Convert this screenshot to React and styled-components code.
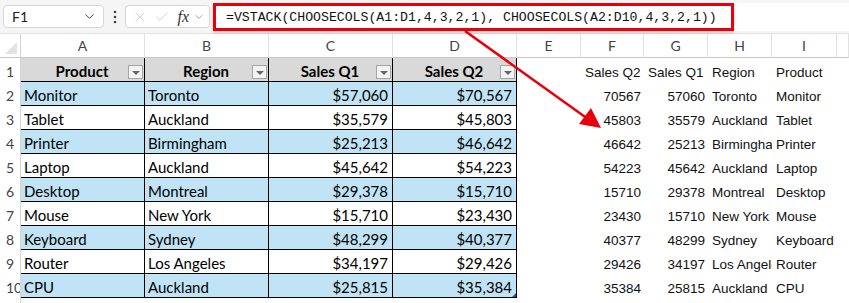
import React from "react";
import styled, { createGlobalStyle } from "styled-components";
import { ChevronDown, X, Check } from "lucide-react";

const GlobalStyle = createGlobalStyle`
  html, body { margin: 0; padding: 0; background: #fff; }
  body { width: 849px; height: 303px; overflow: hidden; }
`;

const COLS = "21px 124px 124px 124px 124px 64px 63px 64px 64px 65px 1fr";
const LETTERS = ["A", "B", "C", "D", "E", "F", "G", "H", "I", ""];

const rows = [
  ["Monitor", "Toronto", 57060, 70567],
  ["Tablet", "Auckland", 35579, 45803],
  ["Printer", "Birmingham", 25213, 46642],
  ["Laptop", "Auckland", 45642, 54223],
  ["Desktop", "Montreal", 29378, 15710],
  ["Mouse", "New York", 15710, 23430],
  ["Keyboard", "Sydney", 48299, 40377],
  ["Router", "Los Angeles", 34197, 29426],
  ["CPU", "Auckland", 25815, 35384],
];

const money = (n) => "$" + n.toLocaleString("en-US");

export default function App() {
  return (
    <Page>
      <GlobalStyle />
      <Toolbar>
        <NameBox>
          <span>F1</span>
          <ChevronDown size={15} strokeWidth={1.6} color="#444" />
        </NameBox>
        <Dots>
          <svg width="4" height="14" viewBox="0 0 4 14">
            <circle cx="2" cy="2" r="1.3" fill="#444" />
            <circle cx="2" cy="7" r="1.3" fill="#444" />
            <circle cx="2" cy="12" r="1.3" fill="#444" />
          </svg>
        </Dots>
        <FxBox>
          <X size={16} strokeWidth={1.2} color="#c4c4c4" />
          <Check size={16} strokeWidth={1.2} color="#c4c4c4" />
          <Fx>fx</Fx>
          <ChevronDown size={12} strokeWidth={1.4} color="#777" />
        </FxBox>
        <FormulaField>
          <Highlight>
            =VSTACK(CHOOSECOLS(A1:D1,4,3,2,1), CHOOSECOLS(A2:D10,4,3,2,1))
          </Highlight>
        </FormulaField>
      </Toolbar>

      <Sheet>
        <Row>
          <Corner />
          {LETTERS.map((l, i) => (
            <ColHead key={i}>{l}</ColHead>
          ))}
        </Row>

        <Row>
          <RowHead>1</RowHead>
          {["Product", "Region", "Sales Q1", "Sales Q2"].map((h) => (
            <HeadCell key={h}>
              {h}
              <FilterBtn />
            </HeadCell>
          ))}
          <Cell />
          {["Sales Q2", "Sales Q1", "Region", "Product"].map((h) => (
            <Spill key={h}>{h}</Spill>
          ))}
          <Cell />
        </Row>

        {rows.map((r, i) => (
          <Row key={r[0]}>
            <RowHead>{i + 2}</RowHead>
            <TableCell $blue={i % 2 === 0}>{r[0]}</TableCell>
            <TableCell $blue={i % 2 === 0}>{r[1]}</TableCell>
            <TableCell $blue={i % 2 === 0} $right>
              {money(r[2])}
            </TableCell>
            <TableCell $blue={i % 2 === 0} $right $handle={i === rows.length - 1}>
              {money(r[3])}
            </TableCell>
            <Cell />
            <Spill $right>{r[3]}</Spill>
            <Spill $right>{r[2]}</Spill>
            <Spill>{r[1]}</Spill>
            <Spill>{r[0]}</Spill>
            <Cell />
          </Row>
        ))}

        <Row>
          <RowHead />
        </Row>
      </Sheet>

      <Arrow width="849" height="303" viewBox="0 0 849 303">
        <line x1="465" y1="31" x2="588" y2="119" stroke="#e8000b" strokeWidth="2.6" />
        <polygon points="601,128 579,124 591,108" fill="#e8000b" />
      </Arrow>
    </Page>
  );
}

const Page = styled.div`
  position: relative;
  width: 849px;
  height: 303px;
  overflow: hidden;
  background: #fff;
`;

const Toolbar = styled.div`
  display: flex;
  align-items: center;
  height: 34px;
  padding-left: 3px;
  box-sizing: border-box;
  background: #f5f5f5;
  border-bottom: 1px solid #e3e3e3;
  font-family: "Lato", "Liberation Sans", sans-serif;
`;

const NameBox = styled.div`
  display: flex;
  align-items: center;
  justify-content: space-between;
  width: 101px;
  height: 23px;
  box-sizing: border-box;
  padding: 0 6px 0 8px;
  background: #fff;
  border: 1px solid #d6d6d6;
  border-radius: 4px;
  font-size: 14px;
  color: #222;
`;

const Dots = styled.div`
  display: flex;
  justify-content: center;
  width: 21px;
`;

const FxBox = styled.div`
  display: flex;
  align-items: center;
  gap: 6px;
  width: 85px;
  height: 23px;
  box-sizing: border-box;
  padding: 0 4px 0 6px;
  background: #fff;
  border: 1px solid #d6d6d6;
  border-radius: 4px;
`;

const Fx = styled.span`
  font-family: "Liberation Serif", serif;
  font-style: italic;
  font-size: 16px;
  color: #333;
  margin-left: 2px;
  margin-right: -2px;
`;

const FormulaField = styled.div`
  flex: 1;
  align-self: stretch;
  display: flex;
  align-items: center;
  margin: 3px 0 2px 3px;
  background: #fff;
`;

const Highlight = styled.div`
  display: flex;
  align-items: center;
  width: 521px;
  height: 100%;
  box-sizing: border-box;
  padding-left: 10px;
  border: 3px solid #e8000b;
  font-family: "Liberation Mono", monospace;
  font-size: 13.2px;
  color: #111;
  white-space: nowrap;
  box-shadow: 0 2px 3px rgba(0, 0, 0, 0.18);
`;

const Sheet = styled.div`
  display: flex;
  flex-direction: column;
`;

const Row = styled.div`
  display: grid;
  grid-template-columns: ${COLS};
  height: 24px;
`;

const Cell = styled.div`
  box-sizing: border-box;
  overflow: hidden;
  white-space: nowrap;
`;

const Corner = styled(Cell)`
  position: relative;
  border-right: 1px solid #d4d4d4;
  border-bottom: 1px solid #c8c8c8;
  &::after {
    content: "";
    position: absolute;
    right: 3px;
    bottom: 3px;
    border-left: 12px solid transparent;
    border-bottom: 12px solid #e2e2e2;
  }
`;

const ColHead = styled(Cell)`
  display: flex;
  align-items: center;
  justify-content: center;
  border-right: 1px solid #e1e1e1;
  border-bottom: 1px solid #c8c8c8;
  font-family: "Lato", "Liberation Sans", sans-serif;
  font-size: 14px;
  color: #444;
`;

const RowHead = styled(Cell)`
  display: flex;
  align-items: flex-end;
  padding: 0 0 2px 6px;
  border-right: 1px solid #d4d4d4;
  font-family: "Lato", "Liberation Sans", sans-serif;
  font-size: 14px;
  color: #444;
`;

const TableCell = styled(Cell)`
  position: relative;
  display: flex;
  align-items: center;
  justify-content: ${(p) => (p.$right ? "flex-end" : "flex-start")};
  padding: 2px 4px 0 3px;
  background: ${(p) => (p.$blue ? "#c0e4f5" : "#fff")};
  border-right: 1px solid #000;
  border-bottom: 1px solid #000;
  font-family: "Lato", "Liberation Sans", sans-serif;
  font-size: 15px;
  color: #000;
  &::after {
    content: "";
    display: ${(p) => (p.$handle ? "block" : "none")};
    position: absolute;
    right: 0;
    bottom: 0;
    border-left: 4px solid transparent;
    border-bottom: 4px solid #2f5597;
  }
`;

const HeadCell = styled(TableCell)`
  justify-content: center;
  background: #d9d9d9;
  font-weight: 700;
`;

const FilterBtn = styled.span`
  position: absolute;
  right: 1px;
  bottom: 2px;
  width: 15px;
  height: 14px;
  box-sizing: border-box;
  background: #f3f3f3;
  border: 1px solid #a6a6a6;
  &::after {
    content: "";
    position: absolute;
    left: 3px;
    top: 5px;
    border-left: 4px solid transparent;
    border-right: 4px solid transparent;
    border-top: 4px solid #666;
  }
`;

const Spill = styled(Cell)`
  display: flex;
  align-items: center;
  justify-content: ${(p) => (p.$right ? "flex-end" : "flex-start")};
  padding: 4px 3px 0 4px;
  font-family: "Liberation Sans", "Arial", sans-serif;
  font-size: 13.5px;
  color: #111;
`;

const Arrow = styled.svg`
  position: absolute;
  left: 0;
  top: 0;
  pointer-events: none;
`;
